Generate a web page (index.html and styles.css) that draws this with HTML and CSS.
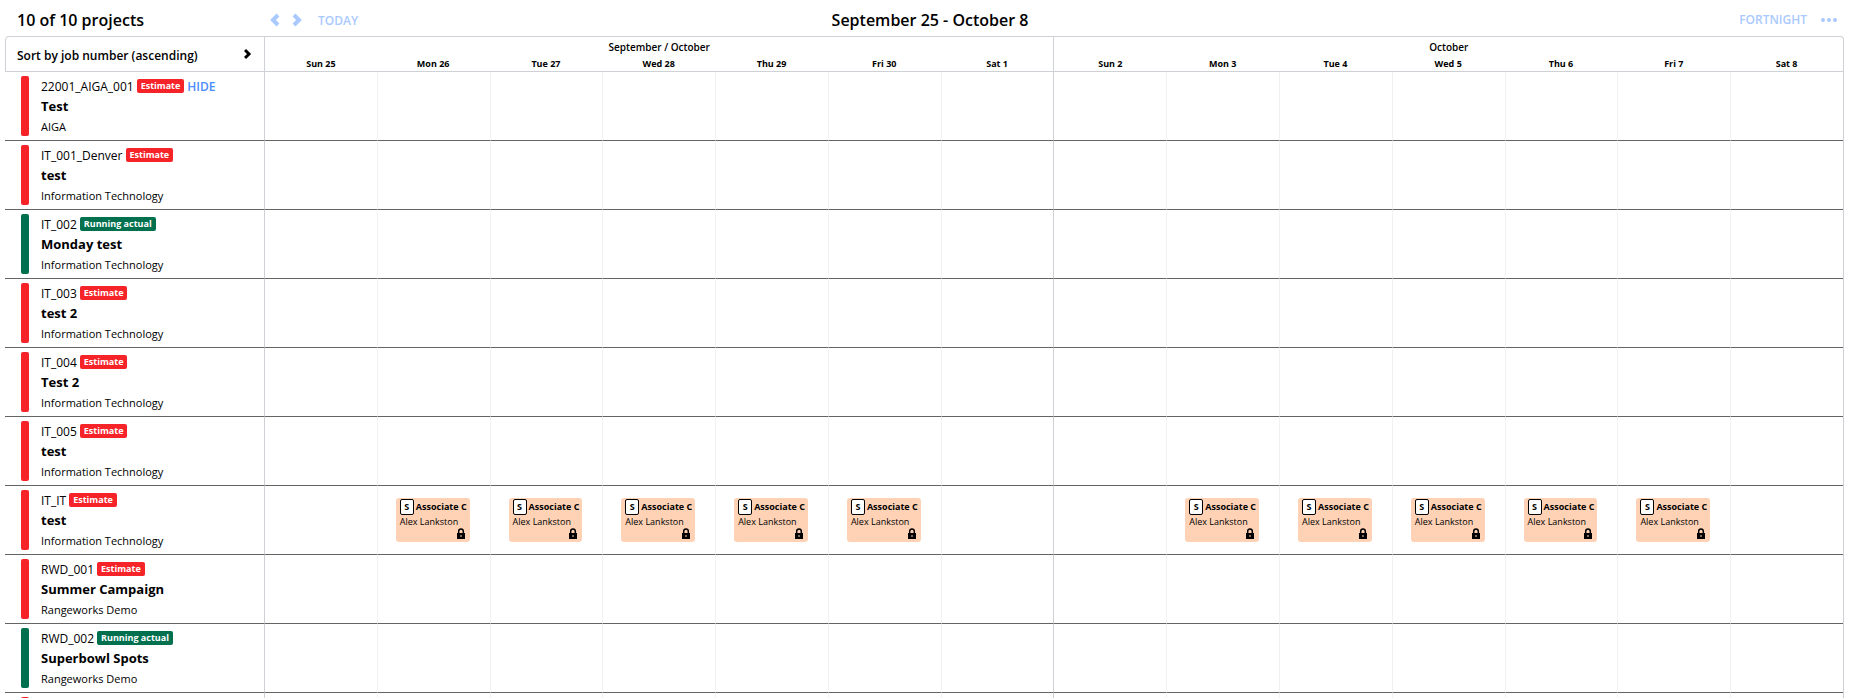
FILE: index.html
```html
<!DOCTYPE html>
<html lang="en">
<head>
<meta charset="utf-8">
<title>Project schedule</title>
<link rel="stylesheet" href="styles.css">
</head>
<body>
<div class="app">
  <header class="toolbar">
    <div class="toolbar-left">
      <h2 class="count">10 of 10 projects</h2>
      <nav class="nav">
        <button class="icon-btn" type="button" aria-label="Previous"><svg width="10" height="14" viewBox="0 0 10 14"><path d="M8 2 3 7l5 5" fill="none" stroke="currentColor" stroke-width="4"/></svg></button>
        <button class="icon-btn" type="button" aria-label="Next"><svg width="10" height="14" viewBox="0 0 10 14"><path d="M2 2l5 5-5 5" fill="none" stroke="currentColor" stroke-width="4"/></svg></button>
        <button class="text-btn today" type="button">TODAY</button>
      </nav>
    </div>
    <h1 class="range">September 25 - October 8</h1>
    <div class="toolbar-right">
      <button class="text-btn" type="button">FORTNIGHT</button>
      <button class="icon-btn" type="button" aria-label="More"><svg width="16" height="4" viewBox="0 0 16 4" fill="currentColor"><circle cx="2" cy="2" r="2"/><circle cx="8" cy="2" r="2"/><circle cx="14" cy="2" r="2"/></svg></button>
    </div>
  </header>
  <table class="schedule">
    <colgroup><col class="project-col"><col span="14"></colgroup>
    <thead>
      <tr class="months">
        <th class="sort-cell" rowspan="2">
          <button class="sort" type="button"><span>Sort by job number (ascending)</span><svg width="8" height="12" viewBox="0 0 8 12"><path d="M1 2l4 4-4 4" fill="none" stroke="currentColor" stroke-width="3"/></svg></button>
        </th>
        <th class="week" colspan="7">September / October</th>
        <th class="week" colspan="7">October</th>
      </tr>
      <tr class="days" id="days"></tr>
    </thead>
    <tbody id="rows"></tbody>
  </table>
</div>
<script src="schedule.js"></script>
</body>
</html>
```
FILE: styles.css
```css
* { box-sizing: border-box; }

body {
  margin: 0;
  background: #fff;
  color: #000;
  font-family: "Open Sans", "Noto Sans", sans-serif;
  font-size: 12px;
}

button {
  padding: 0;
  border: 0;
  background: none;
  font: inherit;
  color: inherit;
  cursor: pointer;
}

svg { display: block; }

.app {
  height: 100vh;
  padding: 0 11px 0 5px;
  overflow: hidden;
}

.toolbar {
  display: grid;
  grid-template-columns: 1fr auto 1fr;
  align-items: center;
  height: 36px;
  padding-top: 3px;
  margin-right: -11px;
}

.toolbar-left { display: flex; align-items: center; }

.count, .range { margin: 0; font-size: 16px; line-height: 20px; font-weight: 600; }
.count { width: 265px; padding-left: 12px; }

.nav, .toolbar-right { display: flex; align-items: center; gap: 12px; color: #a9c9ff; }
.toolbar-right { justify-content: flex-end; gap: 14px; padding-right: 18px; }
.text-btn { font-size: 12px; line-height: 20px; font-weight: 600; }
.today { padding: 2px 0 0 4px; }

.schedule {
  width: 100%;
  table-layout: fixed;
  border-collapse: separate;
  border-spacing: 0;
  border-top: 1px solid #ced2d6;
  border-right: 1px solid #ced2d6;
  border-radius: 4px 4px 0 0;
}

.project-col { width: 259px; }

th { padding: 0; font-size: 9px; font-weight: 700; text-align: center; }
.months { height: 20px; }
.days { height: 15px; }
.days th { line-height: 14px; border-bottom: 1px solid #ced2d6; }
.week { border-left: 1px solid #ced2d6; font-size: 10px; font-weight: 600; line-height: 20px; }
.days .week-start { border-left: 1px solid #ced2d6; }

.sort-cell {
  border-left: 1px solid #ced2d6;
  border-bottom: 1px solid #ced2d6;
  border-radius: 4px 0 0 0;
}

.sort {
  display: flex;
  align-items: center;
  justify-content: space-between;
  width: 100%;
  height: 34px;
  padding: 0 12px 0 11px;
  font-size: 12px;
  font-weight: 600;
}
.sort span { padding-top: 3px; }

tbody tr { height: 69px; }
tbody td { padding: 0; border-left: 1px solid #f1f1f1; border-bottom: 1px solid #646464; }
tbody .week-start { border-left-color: #ced2d6; }
tbody .project-cell { border-left: 0; vertical-align: top; }

.project { display: flex; gap: 12px; padding: 4px 0 3px 16px; text-align: left; }
.stripe { width: 8px; height: 60px; border-radius: 2px; }
.estimate { background: #f62329; }
.actual { background: #00704e; }

.job { display: flex; align-items: center; gap: 3px; height: 20px; font-size: 12px; }
.name { margin: 0; font-size: 13px; font-weight: 700; line-height: 20px; }
.client { font-size: 11px; line-height: 21px; }
.tag {
  height: 14px;
  padding: 0 4px;
  border-radius: 2px;
  color: #fff;
  font-size: 9px;
  font-weight: 700;
  line-height: 14px;
}
.hide { color: #4b8cff; font-weight: 600; }

.booking {
  height: 44px;
  margin: 0 20px 0 18px;
  padding: 1px 0 0 4px;
  overflow: hidden;
  border-radius: 3px;
  background: #ffd2b5;
  white-space: nowrap;
}
.role { display: flex; align-items: center; gap: 2px; font-size: 9px; font-weight: 700; line-height: 16px; }
.status {
  flex: none;
  width: 14px;
  height: 16px;
  border: 1px solid #000;
  border-radius: 2px;
  background: #fff;
  line-height: 14px;
  text-align: center;
}
.person { font-size: 9px; line-height: 13px; }
.lock { margin: 0 4px 0 auto; }
```
FILE: schedule.js
```js
const days = ["Sun 25", "Mon 26", "Tue 27", "Wed 28", "Thu 29", "Fri 30", "Sat 1",
  "Sun 2", "Mon 3", "Tue 4", "Wed 5", "Thu 6", "Fri 7", "Sat 8"];

const projects = [
  { job: "22001_AIGA_001", status: "Estimate", name: "Test", client: "AIGA", hide: true },
  { job: "IT_001_Denver", status: "Estimate", name: "test", client: "Information Technology" },
  { job: "IT_002", status: "Running actual", name: "Monday test", client: "Information Technology" },
  { job: "IT_003", status: "Estimate", name: "test 2", client: "Information Technology" },
  { job: "IT_004", status: "Estimate", name: "Test 2", client: "Information Technology" },
  { job: "IT_005", status: "Estimate", name: "test", client: "Information Technology" },
  { job: "IT_IT", status: "Estimate", name: "test", client: "Information Technology", booked: [1, 2, 3, 4, 5, 8, 9, 10, 11, 12] },
  { job: "RWD_001", status: "Estimate", name: "Summer Campaign", client: "Rangeworks Demo" },
  { job: "RWD_002", status: "Running actual", name: "Superbowl Spots", client: "Rangeworks Demo" },
  { status: "Estimate" }
];

const booking = `<div class="booking">
  <div class="role"><span class="status">S</span><span>Associate C</span></div>
  <div class="person">Alex Lankston</div>
  <svg class="lock" width="10" height="11" viewBox="0 0 10 11"><path d="M1 5h8v6H1z"/><path d="M2.7 5V3.2a2.3 2.3 0 0 1 4.6 0V5" fill="none" stroke="#000" stroke-width="1.5"/><path d="M4.5 7h1v2h-1z" fill="#ffd2b5"/></svg>
</div>`;

const weekStart = i => (i % 7 === 0 ? ' class="week-start"' : "");

document.getElementById("days").innerHTML =
  days.map((d, i) => `<th${weekStart(i)}>${d}</th>`).join("");

document.getElementById("rows").innerHTML = projects.map(p => {
  const kind = p.status === "Estimate" ? "estimate" : "actual";
  const details = p.job ? `<div>
      <div class="job"><span>${p.job}</span><span class="tag ${kind}">${p.status}</span>${p.hide ? '<button class="hide" type="button">HIDE</button>' : ""}</div>
      <h3 class="name">${p.name}</h3>
      <div class="client">${p.client}</div>
    </div>` : "";
  const cells = days.map((d, i) =>
    `<td${weekStart(i)}>${p.booked && p.booked.includes(i) ? booking : ""}</td>`).join("");
  return `<tr><td class="project-cell"><div class="project"><div class="stripe ${kind}"></div>${details}</div></td>${cells}</tr>`;
}).join("");
```
